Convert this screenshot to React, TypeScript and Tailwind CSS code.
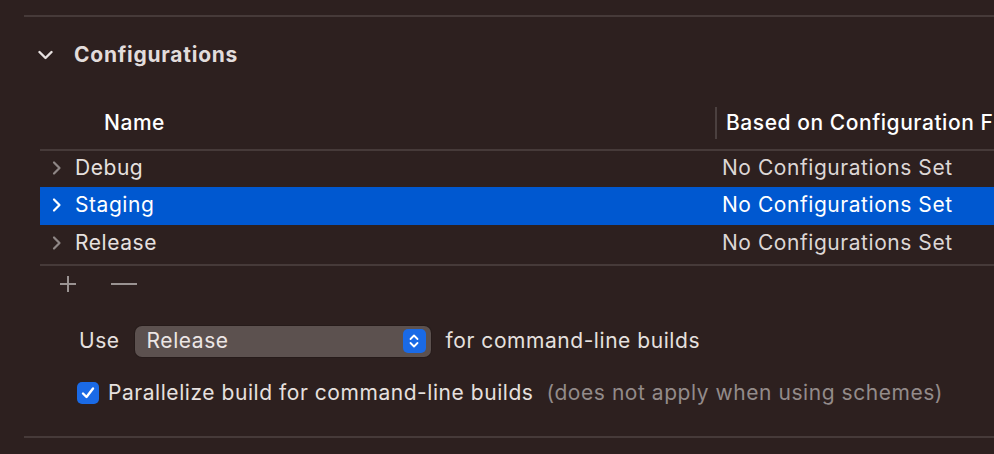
import React from "react";

const Chevron = ({ className = "" }: { className?: string }) => (
  <svg width="10" height="16" viewBox="0 0 10 16" className={className}>
    <path d="M2 2.5 L7.5 8 L2 13.5" fill="none" stroke="currentColor" strokeWidth="2.2" strokeLinecap="round" strokeLinejoin="round" />
  </svg>
);

const rows = [
  { name: "Debug", sel: false, h: "h-[36px]" },
  { name: "Staging", sel: true, h: "h-[38px]" },
  { name: "Release", sel: false, h: "h-[39px]" },
];

export default function App() {
  return (
    <div
      className="w-[994px] h-[454px] bg-[#2d201f] overflow-hidden text-[#e6e0df] tracking-[0.55px]"
      style={{ fontFamily: "Inter, 'Noto Sans', sans-serif" }}
    >
      <div className="pt-[15px] pl-[24px]">
        <div className="h-[2px] bg-[#463a39]" />
      </div>
      <div className="flex items-center h-[74px] pl-[38px] pt-[1px]">
        <svg width="15" height="10" viewBox="0 0 15 10" className="text-[#e6e0df]">
          <path d="M1.5 2 L7.5 8 L13.5 2" fill="none" stroke="currentColor" strokeWidth="2.4" strokeLinecap="round" strokeLinejoin="round" />
        </svg>
        <span className="ml-[21px] text-[21px] font-bold text-[#e2dcdb] tracking-[0.75px]">Configurations</span>
      </div>
      <div className="pl-[40px]">
        <div className="flex items-center h-[58px] pt-[5px]">
          <div className="w-[675px] shrink-0 pl-[64px] text-[21px] text-white font-medium">Name</div>
          <div className="w-[2px] shrink-0 h-[32px] bg-[#4b403f]" />
          <div className="pl-[9px] shrink-0 text-[21px] text-white font-medium whitespace-nowrap">Based on Configuration File</div>
        </div>
        <div className="h-[2px] bg-[#463a39]" />
        {rows.map((r) => (
          <div
            key={r.name}
            className={`flex items-center ${r.h} pb-[3px] text-[21px] ${r.sel ? "bg-[#0058d0] text-white" : ""}`}
          >
            <div className={`w-[35px] shrink-0 pl-[12px] flex items-center ${r.sel ? "text-white" : "text-[#8f8786]"}`}>
              <Chevron />
            </div>
            <div className="w-[647px] shrink-0">{r.name}</div>
            <div className={`whitespace-nowrap ${r.sel ? "text-white" : "text-[#ddd7d6]"}`}>No Configurations Set</div>
          </div>
        ))}
        <div className="h-[2px] bg-[#463a39]" />
        <div className="flex items-center h-[36px] text-[#9a9392]">
          <svg width="20" height="20" viewBox="0 0 20 20" className="ml-[18px]">
            <path d="M10 2 V18 M2 10 H18" stroke="currentColor" strokeWidth="2" />
          </svg>
          <svg width="28" height="20" viewBox="0 0 28 20" className="ml-[32px]">
            <path d="M1 10 H27" stroke="currentColor" strokeWidth="2" />
          </svg>
        </div>
      </div>
      <div className="flex items-center h-[34px] mt-[22px] pl-[79px] text-[21px]">
        <span className="text-[#e6e0df]">Use</span>
        <div className="ml-[15px] w-[296px] h-[31px] rounded-[7px] bg-[#5c514f] flex items-center justify-between pl-[12px] pr-[5px] shadow-[0_0_0_1px_rgba(0,0,0,0.15)]">
          <span className="text-[#ece6e5]">Release</span>
          <div className="w-[23px] h-[24px] rounded-[5px] bg-[#1a6ae6] flex items-center justify-center">
            <svg width="12" height="16" viewBox="0 0 12 16">
              <path d="M2.5 6 L6 2.5 L9.5 6 M2.5 10 L6 13.5 L9.5 10" fill="none" stroke="white" strokeWidth="1.8" strokeLinecap="round" strokeLinejoin="round" />
            </svg>
          </div>
        </div>
        <span className="ml-[15px] text-[#e6e0df]">for command-line builds</span>
      </div>
      <div className="flex items-center h-[30px] mt-[20px] pl-[77px] text-[21px]">
        <div className="w-[22px] h-[22px] rounded-[5px] bg-[#1a6ae6] flex items-center justify-center">
          <svg width="16" height="16" viewBox="0 0 16 16">
            <path d="M3 8.5 L6.5 12 L13 3.5" fill="none" stroke="white" strokeWidth="2.4" strokeLinecap="round" strokeLinejoin="round" />
          </svg>
        </div>
        <span className="ml-[9px] text-[#e6e0df]">Parallelize build for command-line builds</span>
        <span className="ml-[13px] text-[#938b8a] whitespace-nowrap">(does not apply when using schemes)</span>
      </div>
      <div className="pl-[24px] mt-[28px]">
        <div className="h-[2px] bg-[#463a39]" />
      </div>
    </div>
  );
}
